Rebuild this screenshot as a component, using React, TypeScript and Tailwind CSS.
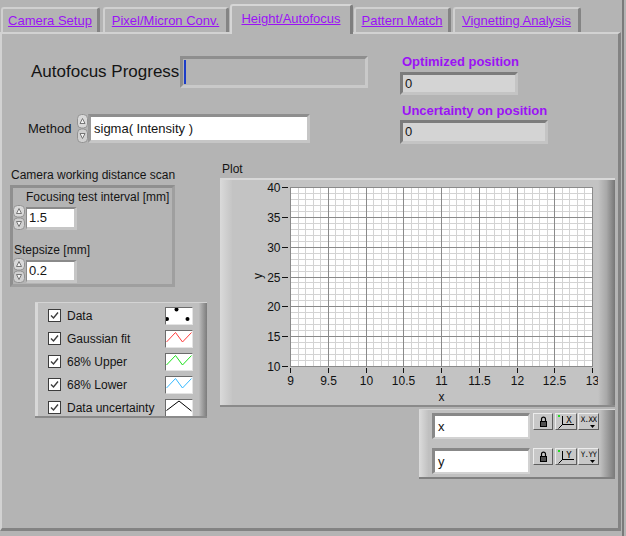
import React from "react";

const tabs = [
  { label: "Camera Setup", w: "w-[99px]", ml: "ml-[1px]", sel: false },
  { label: "Pixel/Micron Conv.", w: "w-[126px]", ml: "ml-[3px]", sel: false },
  { label: "Height/Autofocus", w: "w-[123px]", ml: "ml-[1px]", sel: true },
  { label: "Pattern Match", w: "w-[97px]", ml: "ml-[1px]", sel: false },
  { label: "Vignetting Analysis", w: "w-[128px]", ml: "ml-[2px]", sel: false },
];

function TabBar() {
  return (
    <div className="h-[32px] flex items-end">
      {tabs.map((t) =>
        t.sel ? (
          <div
            key={t.label}
            className={`${t.w} ${t.ml} relative z-10 h-[30px] mb-[-2px] pb-[3px] bg-[#b4b4b4] border-t-2 border-l-2 border-r-[3px] border-t-[#d6d6d6] border-l-[#d6d6d6] border-r-[#7e7e7e] rounded-t-[3px] flex items-center justify-center text-[13px] underline text-[#9b12f5]`}
          >
            {t.label}
          </div>
        ) : (
          <div
            key={t.label}
            className={`${t.w} ${t.ml} h-[25px] pt-[1px] bg-[#b4b4b4] border-t-2 border-l-2 border-r-[3px] border-t-[#d0d0d0] border-l-[#d0d0d0] border-r-[#848484] rounded-t-[3px] flex items-center justify-center text-[13px] underline text-[#9b12f5]`}
          >
            {t.label}
          </div>
        )
      )}
    </div>
  );
}

function Spinner({ w, h }: { w: number; h: number }) {
  const half = (h - 1) / 2;
  const cx = w / 2;
  return (
    <svg width={w} height={h} className="shrink-0">
      <rect x={0.5} y={0.5} width={w - 1} height={half - 0.5} rx={4} fill="#d9d9d9" stroke="#929292" />
      <rect x={0.5} y={half + 1} width={w - 1} height={half - 0.5} rx={4} fill="#d0d0d0" stroke="#929292" />
      <path
        d={`M${cx - 2.5} ${half / 2 + 2.5} L${cx} ${half / 2 - 2.5} L${cx + 2.5} ${half / 2 + 2.5} Z`}
        fill="#f4f4f4"
        stroke="#6a6a6a"
        strokeWidth={0.9}
      />
      <path
        d={`M${cx - 2.5} ${half + 1 + half / 2 - 2.5} L${cx} ${half + 1 + half / 2 + 2.5} L${cx + 2.5} ${half + 1 + half / 2 - 2.5} Z`}
        fill="#f4f4f4"
        stroke="#6a6a6a"
        strokeWidth={0.9}
      />
    </svg>
  );
}

function TopSection() {
  return (
    <div className="h-[127px] flex shrink-0">
      <div className="w-[398px] flex flex-col">
        <div className="mt-[22px] h-[32px] flex items-center">
          <div className="ml-[29px] w-[149px] text-[17px] leading-[20px] whitespace-nowrap">Autofocus Progress</div>
          <div className="w-[188px] h-[32px] border-[3px] border-t-[#8e8e8e] border-l-[#8e8e8e] border-r-[#c9c9c9] border-b-[#c9c9c9] bg-[#b4b4b4] flex py-[1px] pl-[1px]">
            <div className="w-[2px] bg-[#1c3cc8]" />
          </div>
        </div>
        <div className="mt-[26px] h-[29px] flex items-center">
          <div className="ml-[26px] w-[49px] text-[13px] leading-[16px] pt-[1px] whitespace-nowrap">Method</div>
          <Spinner w={11} h={29} />
          <div className="w-[222px] h-[29px] border-[3px] border-t-[#8e8e8e] border-l-[#9a9a9a] border-r-[#c6c6c6] border-b-[#c6c6c6] bg-white flex items-center pl-[3px] text-[13px] leading-[16px]">
            sigma( Intensity )
          </div>
        </div>
      </div>
      <div className="flex flex-col">
        <div className="mt-[19px] text-[13px] leading-[17px] font-bold text-[#9b12f5] pl-[2px] whitespace-nowrap">Optimized position</div>
        <div className="mt-[2px] w-[118px] h-[23px] border-[3px] border-t-[#7c7c7c] border-l-[#7c7c7c] border-r-[#c4c4c4] border-b-[#c4c4c4] bg-[#d4d4d4] flex items-center pl-[2px] text-[13px] leading-[14px]">
          0
        </div>
        <div className="mt-[7px] text-[13px] leading-[17px] font-bold text-[#9b12f5] pl-[2px] whitespace-nowrap">Uncertainty on position</div>
        <div className="mt-[1px] w-[148px] h-[24px] border-[3px] border-t-[#7c7c7c] border-l-[#7c7c7c] border-r-[#c4c4c4] border-b-[#c4c4c4] bg-[#d4d4d4] flex items-center pl-[2px] text-[13px] leading-[14px]">
          0
        </div>
      </div>
    </div>
  );
}

function NumRow({ value }: { value: string }) {
  return (
    <div className="h-[25px] flex items-start">
      <Spinner w={12} h={25} />
      <div className="ml-[1px] mt-[2px] w-[51px] h-[23px] border-t-2 border-l border-r-[3px] border-b-[3px] border-t-[#8a8a8a] border-l-[#8a8a8a] border-r-[#c6c6c6] border-b-[#c6c6c6] bg-white flex items-center pl-[2px] text-[13px] leading-[16px]">
        {value}
      </div>
    </div>
  );
}

function CameraGroup() {
  return (
    <div className="mt-[2px] w-[165px] h-[102px] border-[3px] border-t-[#8f8f8f] border-l-[#8f8f8f] border-r-[#9f9f9f] border-b-[#9f9f9f] flex flex-col">
      <div className="mt-[1px] ml-[13px] text-[12px] leading-[16px] whitespace-nowrap">Focusing test interval [mm]</div>
      <NumRow value="1.5" />
      <div className="mt-[12px] ml-[1px] text-[12px] leading-[16px] whitespace-nowrap">Stepsize [mm]</div>
      <NumRow value="0.2" />
    </div>
  );
}

function Check() {
  return (
    <svg width={13} height={13} className="shrink-0">
      <rect x={0.5} y={0.5} width={12} height={12} fill="#ffffff" stroke="#3c3c3c" />
      <path d="M3 6.5 L5.5 9 L10 3.5" fill="none" stroke="#3c3c3c" strokeWidth={1.4} />
    </svg>
  );
}

function Swatch({ kind }: { kind: string }) {
  let inner: React.ReactNode = null;
  if (kind === "dots") {
    inner = (
      <g fill="#000">
        <circle cx={10.5} cy={1.5} r={2} />
        <circle cx={1} cy={11} r={2} />
        <circle cx={21.5} cy={11} r={2} />
      </g>
    );
  } else if (kind === "black") {
    inner = <polyline points="0.5,10.5 13,1 25.5,11" fill="none" stroke="#000" strokeWidth={1} />;
  } else {
    const c = kind === "red" ? "#ff3b3b" : kind === "green" ? "#1ee01e" : "#35b8ff";
    inner = <polyline points="0.5,11 9.5,1.5 16.5,11 25.5,1.5" fill="none" stroke={c} strokeWidth={1} />;
  }
  return (
    <div className="w-[28px] h-[18px] border border-t-[#6c6c6c] border-l-[#6c6c6c] border-r-[#e4e4e4] border-b-[#e4e4e4] bg-white flex">
      <svg width={26} height={16}>{inner}</svg>
    </div>
  );
}

const legendRows = [
  { label: "Data", kind: "dots" },
  { label: "Gaussian fit", kind: "red" },
  { label: "68% Upper", kind: "green" },
  { label: "68% Lower", kind: "blue" },
  { label: "Data uncertainty", kind: "black" },
];

function PlotLegend() {
  return (
    <div className="mt-[15px] ml-[25px] w-[172px] h-[116px] flex border-t border-t-[#d4d4d4] border-b-2 border-b-[#8a8a8a] bg-[#bfbfbf]">
      <div className="w-[3px] bg-[#d8d8d8]" />
      <div className="flex-1 flex flex-col pt-[1px] overflow-hidden">
        {legendRows.map((r) => (
          <div key={r.label} className="h-[23px] shrink-0 flex items-center">
            <div className="ml-[10px] flex">
              <Check />
            </div>
            <div className="ml-[6px] flex-1 text-[12px] leading-[16px] whitespace-nowrap">{r.label}</div>
            <div className="mr-[6px]">
              <Swatch kind={r.kind} />
            </div>
          </div>
        ))}
      </div>
      <div className="w-[8px] bg-gradient-to-r from-[#bcbcbc] to-[#7c7c7c]" />
    </div>
  );
}

function PlotSvg() {
  const X0 = 58;
  const X1 = 360;
  const Y0 = 7;
  const Y1 = 186;
  const minorV: number[] = [];
  const majorV: number[] = [];
  for (let i = 0; i <= 40; i++) {
    const x = Math.round(X0 + (i * (X1 - X0)) / 40) + 0.5;
    (i % 5 === 0 ? majorV : minorV).push(x);
  }
  const minorH: number[] = [];
  const majorH: number[] = [];
  for (let j = 0; j <= 30; j++) {
    const y = Math.round(Y0 + (j * (Y1 - Y0)) / 30) + 0.5;
    (j % 5 === 0 ? majorH : minorH).push(y);
  }
  const xLabels = ["9", "9.5", "10", "10.5", "11", "11.5", "12", "12.5", "13"];
  const yLabels = ["40", "35", "30", "25", "20", "15", "10"];
  return (
    <svg width={366} height={225} className="shrink-0" shapeRendering="crispEdges">
      <rect x={X0} y={Y0} width={X1 - X0 + 1} height={Y1 - Y0 + 1} fill="#ffffff" />
      {minorV.map((x) => (
        <line key={"mv" + x} x1={x} x2={x} y1={Y0} y2={Y1 + 1} stroke="#d3d3d3" />
      ))}
      {minorH.map((y) => (
        <line key={"mh" + y} x1={X0} x2={X1 + 1} y1={y} y2={y} stroke="#d3d3d3" />
      ))}
      {majorV.map((x) => (
        <line key={"Mv" + x} x1={x} x2={x} y1={Y0} y2={Y1 + 1} stroke="#8a8a8a" />
      ))}
      {majorH.map((y) => (
        <line key={"Mh" + y} x1={X0} x2={X1 + 1} y1={y} y2={y} stroke="#8a8a8a" />
      ))}
      {majorH.map((y, j) => (
        <g key={"yl" + j}>
          <line x1={50} x2={56} y1={y} y2={y} stroke="#111" />
          <text x={48.5} y={y + 4.5} textAnchor="end" fontSize={12} fill="#111" fontFamily="'Liberation Sans', Arial, sans-serif">
            {yLabels[j]}
          </text>
        </g>
      ))}
      {majorV.map((x, i) => (
        <g key={"xl" + i}>
          <line x1={x} x2={x} y1={188} y2={193} stroke="#111" />
          <text x={x} y={205} textAnchor="middle" fontSize={12} fill="#111" fontFamily="'Liberation Sans', Arial, sans-serif">
            {xLabels[i]}
          </text>
        </g>
      ))}
      <text x={209.5} y={221} textAnchor="middle" fontSize={12} fill="#111" fontFamily="'Liberation Sans', Arial, sans-serif">
        x
      </text>
      <text x={30} y={96} textAnchor="middle" fontSize={12} fill="#111" transform="rotate(-90 30 96)" fontFamily="'Liberation Sans', Arial, sans-serif">
        y
      </text>
    </svg>
  );
}

function Graph() {
  return (
    <div className="mt-[1px] w-[395px] h-[229px] flex border-t-2 border-t-[#d8d8d8] border-b-2 border-b-[#8a8a8a] bg-[#c3c3c3]">
      <div className="w-[12px] bg-gradient-to-r from-[#dadada] to-[#c5c5c5]" />
      <PlotSvg />
      <div className="w-[17px] bg-gradient-to-r from-[#c3c3c3] via-[#a9a9a9] to-[#767676]" />
    </div>
  );
}

function LockIcon() {
  return (
    <svg width={9} height={11}>
      <path d="M2.5 5 V3.2 A2 2 0 0 1 6.5 3.2 V5" fill="none" stroke="#000" strokeWidth={1.2} />
      <rect x={1} y={5} width={7} height={6} fill="#000" />
      <line x1={2} x2={7} y1={7} y2={7} stroke="#c8c8c8" strokeWidth={0.8} />
      <line x1={2} x2={7} y1={9} y2={9} stroke="#c8c8c8" strokeWidth={0.8} />
    </svg>
  );
}

function AxisIcon({ letter }: { letter: string }) {
  return (
    <svg width={18} height={15}>
      <rect x={1} y={1} width={2} height={2} fill="#22dd22" />
      <line x1={5.5} x2={5.5} y1={2} y2={11} stroke="#000" />
      <line x1={5.5} x2={17} y1={10.5} y2={10.5} stroke="#000" />
      <line x1={5.5} x2={1.5} y1={10.5} y2={14.5} stroke="#000" />
      <text x={12} y={8.5} textAnchor="middle" fontSize={9} fill="#000" fontFamily="'DejaVu Sans Mono', monospace">
        {letter}
      </text>
    </svg>
  );
}

function FmtIcon({ letter }: { letter: string }) {
  return (
    <svg width={17} height={14}>
      <text x={8.5} y={7} textAnchor="middle" fontSize={7.5} fill="#000" fontFamily="'DejaVu Sans Mono', monospace" letterSpacing={-0.6}>
        {letter + "." + letter + letter}
      </text>
      <path d="M10 10 L15 10 L12.5 13 Z" fill="#000" />
    </svg>
  );
}

function Btn({ w, children }: { w: string; children: React.ReactNode }) {
  return (
    <div className={`${w} h-[17px] border border-t-[#ececec] border-l-[#ececec] border-r-[#5e5e5e] border-b-[#5e5e5e] bg-[#c8c8c8] flex items-center justify-center`}>
      {children}
    </div>
  );
}

function ScaleRow({ letter, top }: { letter: string; top: string }) {
  return (
    <div className={`${top} flex items-start`}>
      <div className="ml-[4px] w-[98px] h-[26px] border-t-[3px] border-l-[3px] border-r-2 border-b-2 border-t-[#888888] border-l-[#888888] border-r-[#d2d2d2] border-b-[#d2d2d2] bg-white flex items-center pl-[3px] text-[13px] leading-[16px]">
        {letter}
      </div>
      <div className="ml-[3px]">
        <Btn w="w-[20px]">
          <LockIcon />
        </Btn>
      </div>
      <div className="ml-[2px]">
        <Btn w="w-[22px]">
          <AxisIcon letter={letter.toUpperCase()} />
        </Btn>
      </div>
      <div className="ml-[1px]">
        <Btn w="w-[21px]">
          <FmtIcon letter={letter.toUpperCase()} />
        </Btn>
      </div>
    </div>
  );
}

function ScaleLegend() {
  return (
    <div className="mt-[2px] ml-[199px] w-[196px] h-[70px] flex border-t border-t-[#d6d6d6] border-b-2 border-b-[#808080] bg-[#c0c0c0]">
      <div className="w-[9px] bg-gradient-to-r from-[#dcdcdc] to-[#c2c2c2]" />
      <div className="flex-1 flex flex-col">
        <ScaleRow letter="x" top="mt-[3px]" />
        <ScaleRow letter="y" top="mt-[9px]" />
      </div>
      <div className="w-[15px] bg-gradient-to-r from-[#c0c0c0] to-[#7a7a7a]" />
    </div>
  );
}

function MiddleSection() {
  return (
    <div className="flex">
      <div className="ml-[8px] w-[210px] flex flex-col">
        <div className="mt-[6px] pl-[1px] text-[12px] leading-[16px] whitespace-nowrap">Camera working distance scan</div>
        <CameraGroup />
        <PlotLegend />
      </div>
      <div className="w-[395px] flex flex-col">
        <div className="pl-[2px] text-[12px] leading-[16px]">Plot</div>
        <Graph />
        <ScaleLegend />
      </div>
    </div>
  );
}

export default function App() {
  return (
    <div className="w-[626px] h-[536px] bg-[#b4b4b4] flex overflow-hidden font-['Liberation_Sans',Arial,sans-serif] text-[#141414]">
      <div className="w-[621px] flex flex-col">
        <TabBar />
        <div className="h-[499px] border-t-2 border-l-2 border-t-[#d2d2d2] border-l-[#d2d2d2] border-r-[3px] border-b-[3px] border-r-[#838383] border-b-[#838383] flex flex-col">
          <TopSection />
          <MiddleSection />
        </div>
      </div>
      <div className="w-[5px] flex pl-[1px]">
        <div className="w-[2px] bg-[#7a7a7a]" />
      </div>
    </div>
  );
}
